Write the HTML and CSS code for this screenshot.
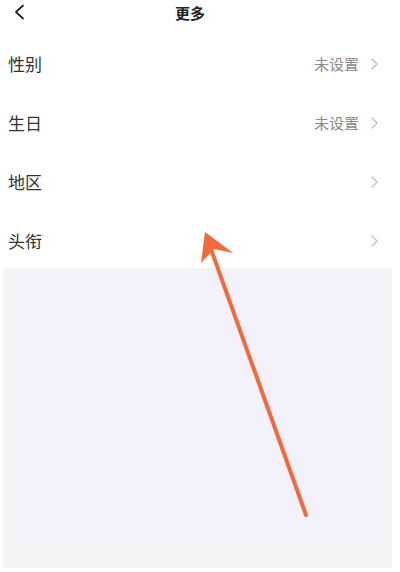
FILE: index.html
```html
<!DOCTYPE html>
<html lang="zh">
<head>
<meta charset="utf-8">
<link rel="stylesheet" href="styles.css">
</head>
<body>
<div class="page">
  <header class="topbar">
    <span class="back">
      <svg width="12" height="16" viewBox="0 0 12 16"><path d="M10 1.5 L3 8 L10 14.5" fill="none" stroke="#222" stroke-width="1.8" stroke-linecap="round" stroke-linejoin="round"/></svg>
    </span>
    <h1 class="title">更多</h1>
  </header>
  <ul class="list">
    <li class="row"><span class="label">性别</span><span class="right"><span class="value">未设置</span><svg class="chev" width="7" height="12" viewBox="0 0 7 12"><path d="M1 1 L6 6 L1 11" fill="none" stroke="#c4c4c4" stroke-width="1.5" stroke-linecap="round" stroke-linejoin="round"/></svg></span></li>
    <li class="row"><span class="label">生日</span><span class="right"><span class="value">未设置</span><svg class="chev" width="7" height="12" viewBox="0 0 7 12"><path d="M1 1 L6 6 L1 11" fill="none" stroke="#c4c4c4" stroke-width="1.5" stroke-linecap="round" stroke-linejoin="round"/></svg></span></li>
    <li class="row"><span class="label">地区</span><span class="right"><svg class="chev" width="7" height="12" viewBox="0 0 7 12"><path d="M1 1 L6 6 L1 11" fill="none" stroke="#c4c4c4" stroke-width="1.5" stroke-linecap="round" stroke-linejoin="round"/></svg></span></li>
    <li class="row"><span class="label">头衔</span><span class="right"><svg class="chev" width="7" height="12" viewBox="0 0 7 12"><path d="M1 1 L6 6 L1 11" fill="none" stroke="#c4c4c4" stroke-width="1.5" stroke-linecap="round" stroke-linejoin="round"/></svg></span></li>
  </ul>
  <div class="blank"><div class="blank-inner"></div></div>
  <svg class="arrow" width="400" height="572" viewBox="0 0 400 572">
    <line x1="306" y1="515" x2="207" y2="238" stroke="#f26a3b" stroke-width="4" stroke-linecap="round"/>
    <path d="M205 232 L233 253 L214 249 L201 263 Z" fill="#f26a3b"/>
  </svg>
</div>
</body>
</html>
```
FILE: styles.css
```css
* { box-sizing: border-box; }
html, body { margin: 0; padding: 0; background: #fff; }
body { font-family: "Noto Sans CJK SC", "Noto Sans", sans-serif; }
.page { position: relative; width: 400px; height: 572px; overflow: hidden; }
.topbar { height: 24px; display: flex; align-items: center; justify-content: center; position: relative; }
.back { position: absolute; left: 13px; top: 4px; display: flex; }
.title { margin: 0; font-size: 15px; font-weight: 700; color: #222; line-height: 1; margin-left: -20px; }
.list { list-style: none; margin: 10px 0 0; padding: 0; }
.row { height: 59px; display: flex; align-items: center; justify-content: space-between; padding: 0 22px 0 8px; }
.label { font-size: 17px; color: #333; line-height: 1; }
.right { display: flex; align-items: center; gap: 12px; }
.value { font-size: 15px; color: #8a8a8a; line-height: 1; }
.chev { display: block; }
.blank { margin: -2px 8px 0 3px; height: 300px; background: #f4f4f5; padding: 3px 6px 25px 13px; }
.blank-inner { height: 100%; background: #f3f2fa; }
.arrow { position: absolute; left: 0; top: 0; pointer-events: none; }
```
